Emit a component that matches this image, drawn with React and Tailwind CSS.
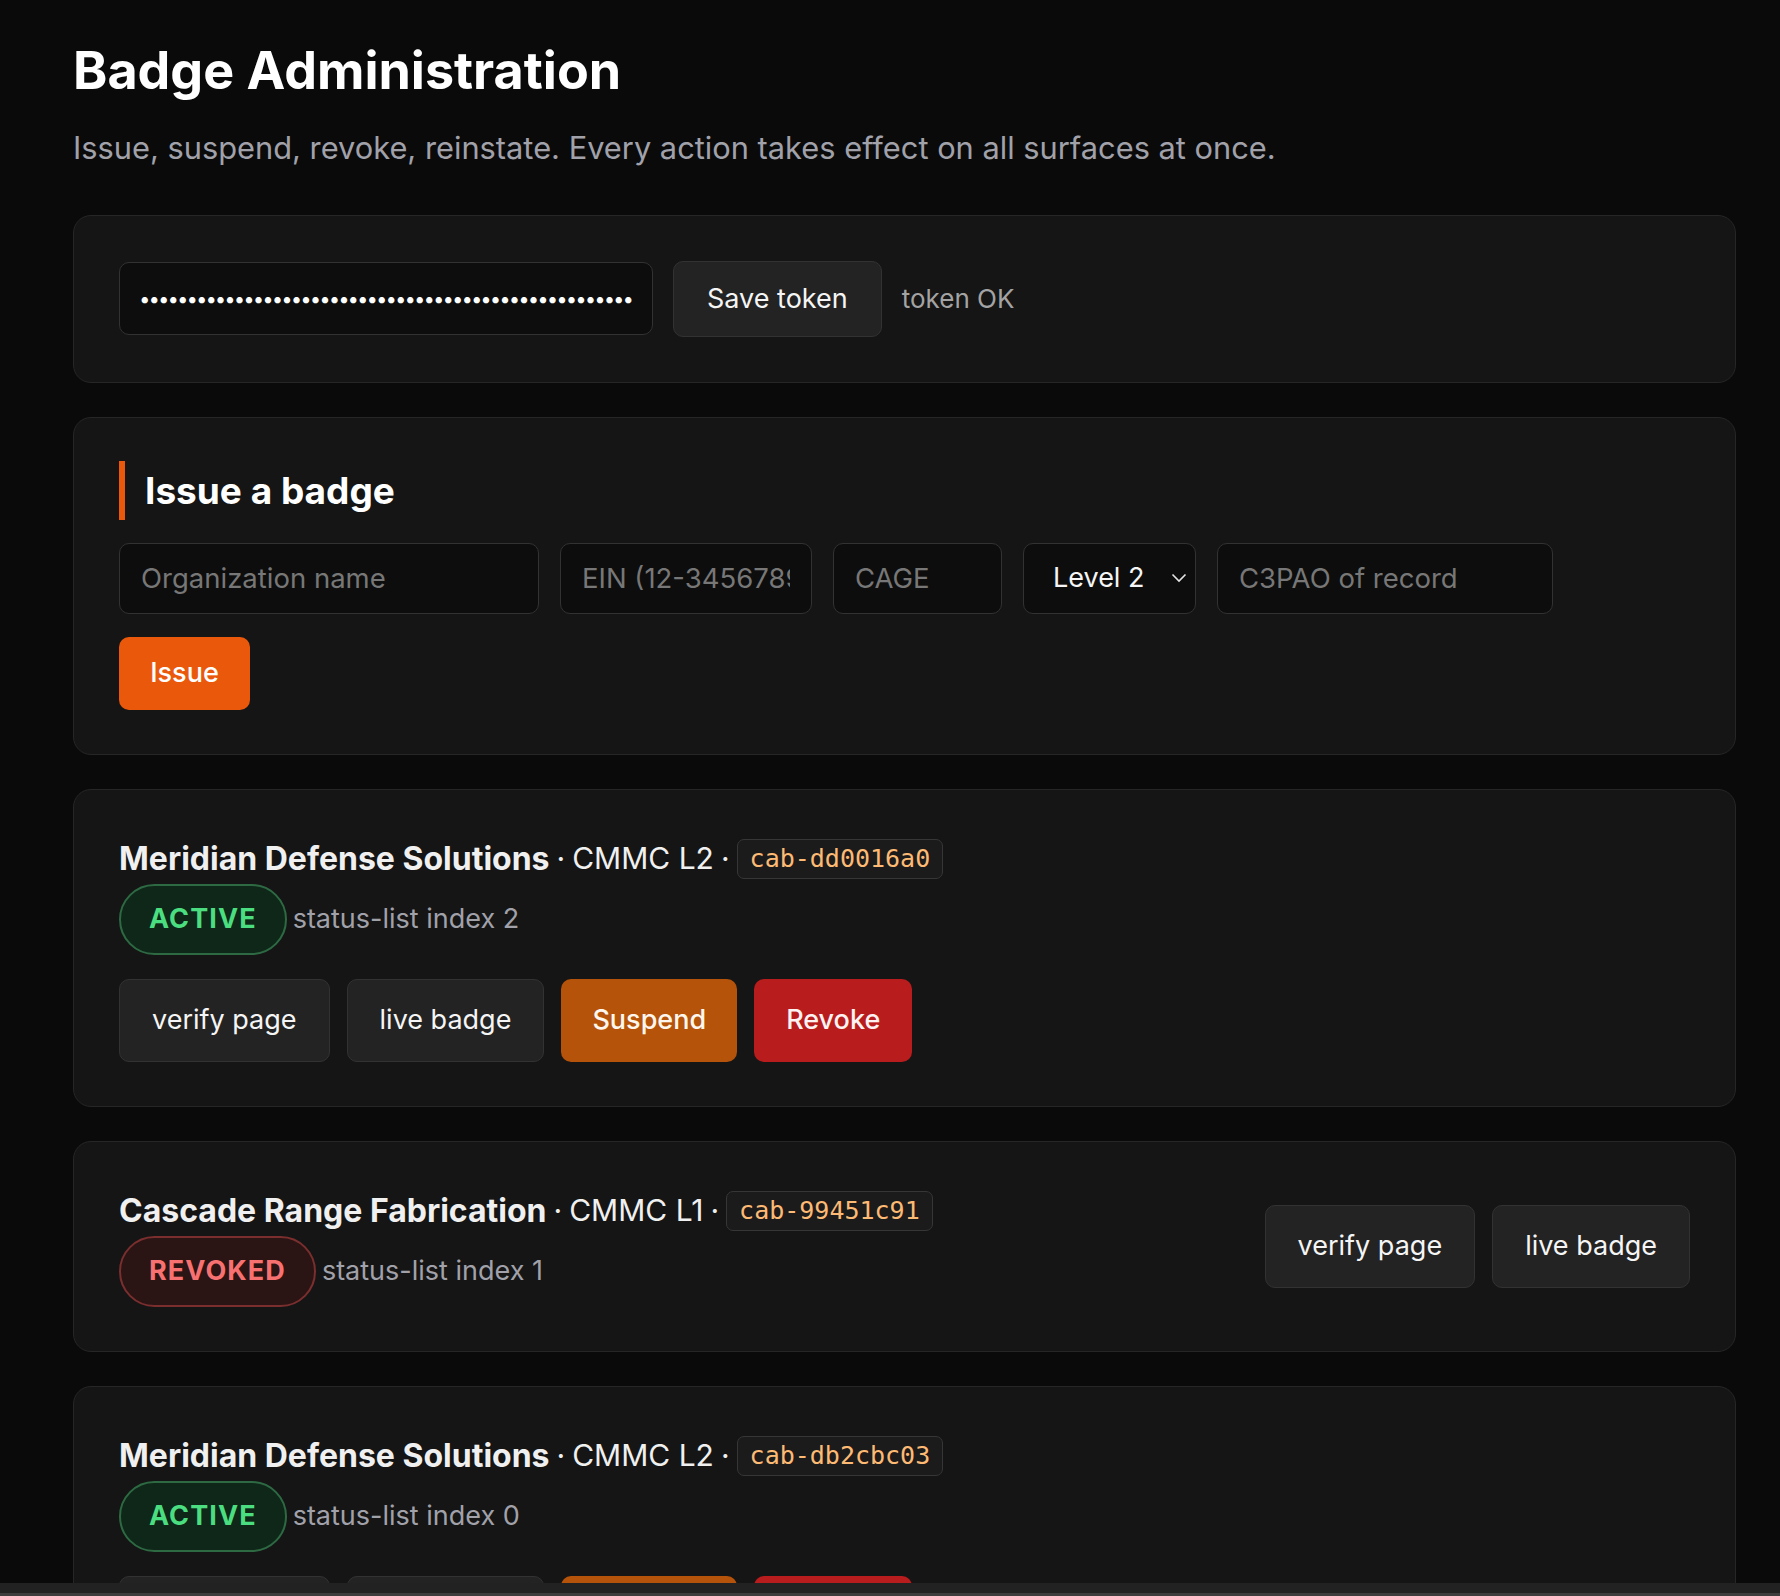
import React from 'react';

const badges = [
  { org: 'Meridian Defense Solutions', level: 'CMMC L2', id: 'cab-dd0016a0', status: 'active', index: 2 },
  { org: 'Cascade Range Fabrication', level: 'CMMC L1', id: 'cab-99451c91', status: 'revoked', index: 1 },
  { org: 'Meridian Defense Solutions', level: 'CMMC L2', id: 'cab-db2cbc03', status: 'active', index: 0 },
];

const ghostBtn =
  'h-[83px] px-[32px] rounded-[10px] bg-[#232323] border border-[#323232] text-[#f5f5f5] text-[27px]';

const field =
  'h-[71px] rounded-[10px] bg-[#0d0d0d] border border-[#323232] px-[21px] text-[27.5px] text-[#f5f5f5] placeholder-[#777777] outline-none';

const StatusPill = ({ status }) =>
  status === 'active' ? (
    <span className="h-[71px] px-[28px] flex items-center rounded-full bg-[#0f2718] border-2 border-[#2d6a43] text-[#4ade80] font-bold text-[27px] tracking-[0.04em]">
      ACTIVE
    </span>
  ) : (
    <span className="h-[71px] px-[28px] flex items-center rounded-full bg-[#2a1414] border-2 border-[#7a2e2e] text-[#f87171] font-bold text-[27px] tracking-[0.04em]">
      REVOKED
    </span>
  );

const BadgeCard = ({ badge }) => {
  const active = badge.status === 'active';
  return (
    <div
      className={`rounded-[18px] bg-[#151515] border border-[#262626] px-[45px] py-[44px] flex ${
        active ? 'flex-col' : 'items-center justify-between'
      }`}
    >
      <div className="flex flex-col">
        {/* title row */}
        <div className="h-[50px] flex items-center gap-[7px] text-[30px] text-[#f0f0f0]">
          <span className="font-bold text-[32px]">{badge.org}</span>
          <span>·</span>
          <span>{badge.level}</span>
          <span>·</span>
          <code className="h-[40px] px-[12px] flex items-center rounded-[7px] bg-[#1b1b1b] border border-[#363636] text-[#fdba74] text-[25px] font-['DejaVu_Sans_Mono',monospace]">
            {badge.id}
          </code>
        </div>
        {/* status row */}
        <div className="flex items-center gap-[6px]">
          <StatusPill status={badge.status} />
          <span className="text-[27px] text-[#a1a1aa]">status-list index {badge.index}</span>
        </div>
      </div>

      <div className={`flex items-center gap-[17px] ${active ? 'mt-[24px]' : ''}`}>
        <button className={ghostBtn}>verify page</button>
        <button className={ghostBtn}>live badge</button>
        {active && (
          <>
            <button className="h-[83px] px-[31px] rounded-[10px] bg-[#b45309] text-[#fff7ed] text-[27px] font-medium">
              Suspend
            </button>
            <button className="h-[83px] px-[32px] rounded-[10px] bg-[#b91c1c] text-[#fef2f2] text-[27px] font-medium">
              Revoke
            </button>
          </>
        )}
      </div>
    </div>
  );
};

export default function App() {
  return (
    <div className="h-screen overflow-hidden bg-[#0a0a0a] font-['Inter',sans-serif] relative">
      <div className="pl-[73px] pr-[44px] pt-[45px]">
        <h1 className="text-[52px] leading-none font-bold text-white">Badge Administration</h1>
        <p className="mt-[36px] text-[30.8px] leading-none text-[#a1a1aa]">
          Issue, suspend, revoke, reinstate. Every action takes effect on all surfaces at once.
        </p>

        <div className="mt-[51px] flex flex-col gap-[34px]">
          {/* token card */}
          <div className="rounded-[18px] bg-[#151515] border border-[#262626] p-[45px] flex items-center">
            <input
              type="password"
              readOnly
              value="xxxxxxxxxxxxxxxxxxxxxxxxxxxxxxxxxxxxxxxxxxxxxxxxxxxx"
              className="w-[534px] h-[73px] rounded-[10px] bg-[#0d0d0d] border border-[#323232] px-[20px] text-[20px] font-bold text-white outline-none"
            />
            <button className="ml-[20px] h-[76px] px-[33px] rounded-[10px] bg-[#232323] border border-[#323232] text-[#f5f5f5] text-[27px]">
              Save token
            </button>
            <span className="ml-[20px] text-[26px] text-[#a3a3a3]">token OK</span>
          </div>

          {/* issue card */}
          <div className="rounded-[18px] bg-[#151515] border border-[#262626] px-[45px] pt-[43px] pb-[44px]">
            <h2 className="h-[59px] border-l-[6px] border-[#ea580c] pl-[20px] flex items-center text-[37px] font-bold text-white">
              Issue a badge
            </h2>
            <div className="mt-[23px] flex items-center gap-[21px]">
              <input placeholder="Organization name" className={`${field} w-[420px]`} />
              <input placeholder="EIN (12-3456789)" className={`${field} w-[252px]`} />
              <input placeholder="CAGE" className={`${field} w-[169px]`} />
              <div className="relative w-[173px] h-[71px] rounded-[10px] bg-[#0d0d0d] border border-[#323232] flex items-center pl-[29px] text-[27px] text-[#f5f5f5]">
                Level 2
                <svg className="absolute right-[8px] top-[29px]" width="16" height="10" viewBox="0 0 16 10" fill="none">
                  <path d="M1.5 1.5 L8 8 L14.5 1.5" stroke="#e5e5e5" strokeWidth="1.6" />
                </svg>
              </div>
              <input placeholder="C3PAO of record" className={`${field} w-[336px]`} />
            </div>
            <button className="mt-[23px] h-[73px] w-[131px] rounded-[10px] bg-[#ea580c] text-white text-[27px] font-medium">
              Issue
            </button>
          </div>

          {badges.map((b) => (
            <BadgeCard key={b.id} badge={b} />
          ))}
        </div>
      </div>

      {/* window bottom edge */}
      <div className="absolute left-0 right-0 bottom-0 h-[13px] bg-[#222222] border-b-[3px] border-[#3d3d3d]" />
    </div>
  );
}
